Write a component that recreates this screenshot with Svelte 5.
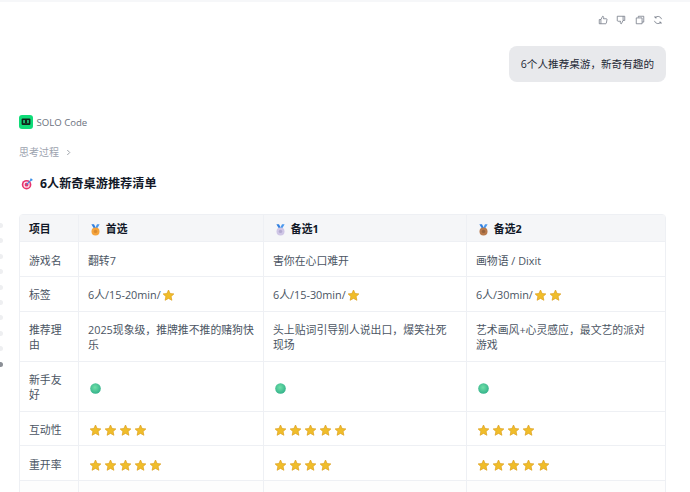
<script>
	const dots = Array(9).fill(0);

	const rows = [
		{ label: "游戏名", cells: [{ text: "翻转7" }, { text: "害你在心口难开" }, { text: "画物语 / Dixit" }] },
		{
			label: "标签",
			cells: [
				{ text: "6人/15-20min/", stars: 1 },
				{ text: "6人/15-30min/", stars: 1 },
				{ text: "6人/30min/", stars: 2 }
			]
		},
		{
			label: "推荐理由",
			cells: [
				{ text: "2025现象级，推牌推不推的赌狗快乐" },
				{ text: "头上贴词引导别人说出口，爆笑社死现场" },
				{ text: "艺术画风+心灵感应，最文艺的派对游戏" }
			]
		},
		{ label: "新手友好", cells: [{ ball: true }, { ball: true }, { ball: true }] },
		{ label: "互动性", cells: [{ stars: 4 }, { stars: 5 }, { stars: 4 }] },
		{ label: "重开率", cells: [{ stars: 5 }, { stars: 4 }, { stars: 5 }] }
	];

	const picks = [
		{ name: "首选", rank: 1, color: "#f5a33c", dark: "#d98a2e" },
		{ name: "备选1", rank: 2, color: "#cfc6e6", dark: "#b3a9d0" },
		{ name: "备选2", rank: 3, color: "#b8794a", dark: "#96623b" }
	];
</script>

{#snippet star()}
	<svg class="emoji" viewBox="0 0 15 15" aria-hidden="true">
		<path
			d="M7.5 2 9.1 5.5 12.9 5.9 10.1 8.5 10.9 12.3 7.5 10.4 4.1 12.3 4.9 8.5 2.1 5.9 5.9 5.5Z"
			fill="#f0bd2a"
			stroke="#dc9f1c"
			stroke-width="0.7"
			stroke-linejoin="round"
		/>
	</svg>
{/snippet}

{#snippet medal(p)}
	<svg class="emoji" viewBox="0 0 15 15" aria-hidden="true">
		<path d="M3.4 2.2H6L7.9 6 6.4 7.4Z" fill="#2f7fe0" />
		<path d="M11.6 2.2H9L7.1 6 8.6 7.4Z" fill="#4a98ee" />
		<circle cx="7.5" cy="9.4" r="4" fill={p.color} />
		<circle cx="7.5" cy="9.4" r="1.7" fill={p.dark} />
	</svg>
{/snippet}

<div class="page">
	<div class="dots">
		{#each dots as _}
			<span class="dot"></span>
		{/each}
		<span class="dot dark"></span>
	</div>

	<div class="actions">
		<svg viewBox="0 0 12 12" aria-hidden="true">
			<path d="M1.5 5.5H3.5V10.5H1.5ZM3.5 5.5 5.5 1.5C6.5 1.5 7 2.2 6.8 3.2L6.5 4.5H10C10.6 4.5 10.9 5 10.8 5.5L10 9.7C9.9 10.2 9.5 10.5 9 10.5H3.5" />
		</svg>
		<svg viewBox="0 0 12 12" aria-hidden="true">
			<path d="M1.5 1.5H10.5V6.5H8.5L6.5 10.5C5.5 10.5 5 9.8 5.2 8.8L5.5 7.5H2.5C1.8 7.5 1.4 7 1.5 6.4ZM8.5 1.5V6.5" />
		</svg>
		<svg viewBox="0 0 12 12" aria-hidden="true">
			<path d="M4 3V1.5H10.5V8.5H8.5M1.5 3.5H8.5V10.5H1.5Z" />
		</svg>
		<svg viewBox="0 0 12 12" aria-hidden="true">
			<path d="M10.3 5A4.5 4.5 0 0 0 2.6 3.2M1.7 7A4.5 4.5 0 0 0 9.4 8.8M2.4 1.2V3.4H4.6M9.6 10.8V8.6H7.4" />
		</svg>
	</div>

	<div class="question">
		<div class="bubble">6个人推荐桌游，新奇有趣的</div>
	</div>

	<div class="model">
		<svg class="logo" viewBox="0 0 14 14" aria-hidden="true">
			<rect width="14" height="14" rx="3" fill="#10dc78" />
			<rect x="2.6" y="3.4" width="8.8" height="6.6" rx="1" fill="#10241a" />
			<rect x="4.2" y="5" width="5.6" height="3.2" fill="#1fc877" />
			<rect x="5.9" y="5" width="2.2" height="3.2" fill="#10241a" />
		</svg>
		<span>SOLO Code</span>
	</div>

	<div class="thinking">
		<span>思考过程</span>
		<svg viewBox="0 0 6 8" aria-hidden="true"><path d="M1.5 1 4.5 4 1.5 7" /></svg>
	</div>

	<h3 class="title">
		<svg class="target" viewBox="0 0 14 14" aria-hidden="true">
			<circle cx="6.5" cy="7.8" r="5.6" fill="#e8336d" />
			<circle cx="6.5" cy="7.8" r="3.7" fill="#fbe3ea" />
			<circle cx="6.5" cy="7.8" r="2.2" fill="#e8336d" />
			<path d="M6.5 7.8 11.5 2.5" stroke="#3a8ee8" stroke-width="1.2" />
			<path d="M10.5 1 11 3 13 3.5 13.5 1.5 11.8.5Z" fill="#3a8ee8" />
		</svg>
		<span>6人新奇桌游推荐清单</span>
	</h3>

	<table>
		<colgroup>
			<col class="c0" />
			<col class="c1" />
			<col class="c2" />
			<col />
		</colgroup>
		<thead>
			<tr>
				<th>项目</th>
				{#each picks as p}
					<th>{@render medal(p)} {p.name}</th>
				{/each}
			</tr>
		</thead>
		<tbody>
			{#each rows as row}
				<tr>
					<td>{row.label}</td>
					{#each row.cells as cell}
						<td>
							{#if cell.text}{cell.text}{/if}{#if cell.ball}<svg class="emoji" viewBox="0 0 15 15" aria-hidden="true">
									<defs>
										<radialGradient id="ball" cx="0.45" cy="0.4" r="0.65">
											<stop offset="0" stop-color="#6fe0a8" />
											<stop offset="1" stop-color="#2fae88" />
										</radialGradient>
									</defs>
									<circle cx="7.5" cy="7.5" r="5.3" fill="url(#ball)" />
								</svg>{/if}{#each Array(cell.stars || 0) as _}{@render star()}{/each}
						</td>
					{/each}
				</tr>
			{/each}
			<tr class="cut">
				<td></td>
				<td></td>
				<td></td>
				<td></td>
			</tr>
		</tbody>
	</table>
</div>

<style>
	:global(body) {
		margin: 0;
		background: #fff;
		overflow: hidden;
	}

	.page {
		position: relative;
		height: 492px;
		overflow: hidden;
		box-sizing: border-box;
		border-top: 2px solid #f6f7f9;
		padding: 0 24px 0 19px;
		font-family: "Open Sans", "Noto Sans CJK SC", sans-serif;
		font-size: 10.85px;
		line-height: 15px;
		color: #4b5563;
	}

	.dots {
		position: absolute;
		left: -2px;
		top: 221px;
		display: flex;
		flex-direction: column;
		gap: 10.4px;
	}
	.dot {
		width: 5px;
		height: 5px;
		border-radius: 50%;
		background: #eeeff1;
	}
	.dot.dark {
		background: #8b8f96;
	}

	.actions {
		display: flex;
		justify-content: flex-end;
		gap: 8.5px;
		padding: 13px 3px 0 0;
		height: 31px;
		box-sizing: border-box;
	}
	.actions svg {
		width: 10px;
		height: 10px;
		fill: none;
		stroke: #6b7280;
		stroke-width: 0.9;
		stroke-linejoin: round;
	}

	.question {
		display: flex;
		justify-content: flex-end;
		margin-top: 13px;
	}
	.bubble {
		background: #e8e9ec;
		color: #1f2937;
		font-size: 10.6px;
		border-radius: 8px;
		padding: 11px 12px 10px;
	}

	.model {
		display: flex;
		align-items: center;
		gap: 3.5px;
		margin-top: 33px;
		height: 14px;
		font-size: 9.6px;
		color: #6b7280;
	}
	.logo {
		width: 14px;
		height: 14px;
	}

	.thinking {
		display: flex;
		align-items: center;
		gap: 7px;
		margin-top: 15px;
		height: 16px;
		font-size: 10px;
		color: #9ca3af;
	}
	.thinking svg {
		width: 5px;
		height: 7px;
		fill: none;
		stroke: #8b919a;
		stroke-width: 1;
	}

	.title {
		display: flex;
		align-items: center;
		gap: 7px;
		margin: 15px 0 0 2px;
		height: 17px;
		font-size: 12.2px;
		font-weight: 700;
		color: #111827;
	}
	.target {
		width: 12px;
		height: 12px;
	}

	table {
		margin-top: 22px;
		width: 647px;
		table-layout: fixed;
		border-collapse: separate;
		border-spacing: 0;
		border: 1px solid #eef0f4;
		border-radius: 4px;
	}
	.c0 {
		width: 59px;
	}
	.c1 {
		width: 185px;
	}
	.c2 {
		width: 203px;
	}

	th,
	td {
		padding: 10.5px 9px 8.4px;
		text-align: left;
		vertical-align: middle;
		border-bottom: 1px solid #eef0f4;
		border-right: 1px solid #eef0f4;
		font-weight: 400;
	}
	td:nth-child(2) {
		padding-right: 7px;
	}
	th:last-child,
	td:last-child {
		border-right: 0;
		padding-right: 12px;
	}
	th {
		padding: 6px 9px 5px;
		background: #f5f6f8;
		color: #111827;
		font-weight: 700;
	}
	.cut td {
		height: 40px;
		background: #fdfdfd;
	}

	.emoji {
		display: inline-block;
		width: 15px;
		height: 15px;
		margin: -2px 0;
		vertical-align: -2px;
	}
</style>
